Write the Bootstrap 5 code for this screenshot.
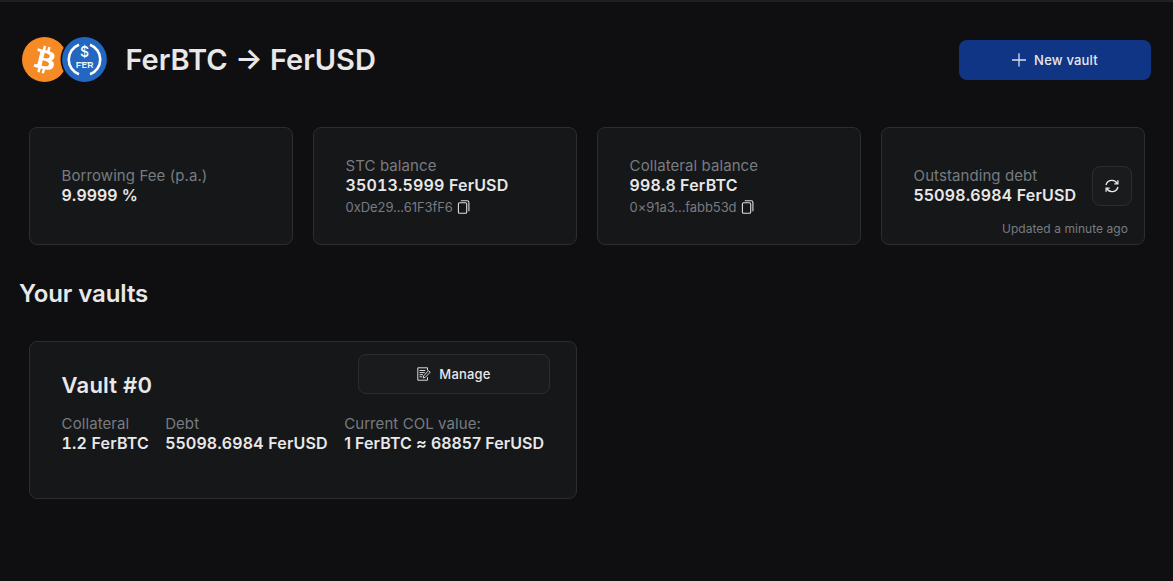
<!DOCTYPE html>
<html lang="en">
<head>
<meta charset="utf-8">
<meta name="viewport" content="width=device-width, initial-scale=1">
<title>FerBTC → FerUSD</title>
<link href="https://cdn.jsdelivr.net/npm/bootstrap@5.3.0/dist/css/bootstrap.min.css" rel="stylesheet">
<style>
body{background:#0f0f11;color:#e8e8e9;font-family:Inter,"Liberation Sans",sans-serif;border-top:2px solid #1f1f25;height:581px;overflow:hidden}
svg{display:block;flex:none}
.page-head{padding:35px 22px 0;height:78px}
.page-title{font-size:29px;font-weight:600;line-height:46px;margin:0 0 0 18.4px;letter-spacing:0}
.act{height:40px;width:192px;border-radius:8px;font-size:13px;font-weight:500;letter-spacing:.2px;color:#e8e8e9;padding:0}
.act span{padding-top:2px}
.act-new{background:#113585;border:0;margin-top:3px}
.act-plain{background:#1a1b1d;border:1px solid #2b2d30}
.stats{display:grid;grid-template-columns:repeat(4,264px);gap:20px;padding:47px 29px 0}
.panel{background:#161719;border:1px solid #2b2d2f;border-radius:8px;position:relative}
.stat{height:118px;padding:0 31.6px}
.stat-addr{padding-top:1px}
.lbl{font-size:15px;line-height:20px;color:#767c80;letter-spacing:.08px;white-space:nowrap}
.val{font-size:16px;line-height:20px;font-weight:600;letter-spacing:.2px;white-space:nowrap;margin-top:-1px;padding-bottom:1px}
.val-tab{font-variant-numeric:tabular-nums;letter-spacing:.15px}
.val-tight{letter-spacing:.06px}
.addr{font-size:13px;line-height:20px;color:#767c80;letter-spacing:-.08px;margin-top:1px;gap:4.6px}
.refresh{position:absolute;right:12px;top:38px;width:40px;height:40px;border-radius:8px;padding:0}
.updated{position:absolute;right:16px;bottom:6px;font-size:12px;line-height:18px;color:#767c80;letter-spacing:.05px;white-space:nowrap}
.sect{font-size:24px;line-height:30px;font-weight:600;margin:34px 0 0 19px;letter-spacing:-.08px}
.vault{width:548px;height:158px;margin:32px 0 0 29px;padding:12px 26px 0 31.6px}
.vault h3{font-size:22px;line-height:28px;font-weight:600;margin:17px 0 0;letter-spacing:.2px}
.figures{gap:16.3px;margin-top:15px}
</style>
</head>
<body>
<header class="page-head d-flex justify-content-between align-items-start">
  <div class="d-flex">
    <svg width="85" height="46" viewBox="0 0 85 46">
      <circle cx="22.5" cy="22.5" r="22.5" fill="#f68b26"/>
      <path transform="translate(0 .2) scale(1.4)" fill="#fff" d="M23.189 14.02c.314-2.096-1.283-3.223-3.465-3.975l.708-2.84-1.728-.43-.69 2.765c-.454-.114-.92-.22-1.385-.326l.695-2.783L15.596 6l-.708 2.839c-.376-.086-.746-.17-1.104-.26l.002-.009-2.384-.595-.46 1.846s1.283.294 1.256.312c.7.175.826.638.805 1.006l-.806 3.235c.048.012.11.03.18.057l-.183-.045-1.13 4.532c-.086.212-.303.531-.793.41.018.025-1.256-.313-1.256-.313l-.858 1.978 2.25.561c.418.105.828.215 1.231.318l-.715 2.872 1.727.43.708-2.84c.472.127.93.245 1.378.357l-.706 2.828 1.728.43.715-2.866c2.948.558 5.164.333 6.097-2.333.752-2.146-.037-3.385-1.588-4.192 1.13-.26 1.98-1.003 2.207-2.538zm-3.95 5.538c-.533 2.147-4.148.986-5.32.695l.95-3.805c1.172.293 4.929.872 4.37 3.11zm.535-5.569c-.487 1.953-3.495.96-4.47.717l.86-3.45c.975.243 4.118.696 3.61 2.733z"/>
      <circle cx="62.5" cy="22.5" r="24" fill="#0f0f11"/>
      <circle cx="62.5" cy="22.5" r="22.4" fill="#2367c1"/>
      <path d="M57 7.7A15.8 15.8 0 0 0 57 37.3M68 7.7A15.8 15.8 0 0 1 68 37.3" fill="none" stroke="#fff" stroke-width="2.6"/>
      <text x="62.5" y="20.3" text-anchor="middle" font-family="Inter" font-size="14" font-weight="500" fill="#fff">$</text>
      <text x="53.8" y="31.2" font-family="Inter" font-size="8" font-weight="500" fill="#fff" textLength="17.6" lengthAdjust="spacingAndGlyphs">FER</text>
      <path d="M54.5 25.9h15" stroke="#fff" stroke-width=".9"/>
    </svg>
    <h1 class="page-title">FerBTC → FerUSD</h1>
  </div>
  <button class="btn act act-new d-flex align-items-center justify-content-center">
    <svg width="14" height="14" viewBox="0 0 14 14" class="me-2"><path d="M7 .3v13.2M0 7h14" stroke="#d9deeb" stroke-width="1.3"/></svg><span>New vault</span>
  </button>
</header>

<section class="stats">
  <div class="panel stat d-flex flex-column justify-content-center">
    <div class="lbl">Borrowing Fee (p.a.)</div>
    <div class="val val-tight">9.9999 %</div>
  </div>
  <div class="panel stat stat-addr d-flex flex-column justify-content-center">
    <div class="lbl">STC balance</div>
    <div class="val val-tab">35013.5999 FerUSD</div>
    <div class="addr d-flex align-items-center"><span>0xDe29...61F3fF6</span>
      <svg width="14" height="14" viewBox="0 0 14 14" fill="none" stroke="#dedede" stroke-width="1.1"><rect x="1.4" y="2.7" width="8.3" height="10.6" rx="1.3"/><path d="M3.8.7h6.4c1 0 1.7.7 1.7 1.7v8.8"/></svg></div>
  </div>
  <div class="panel stat stat-addr d-flex flex-column justify-content-center">
    <div class="lbl">Collateral balance</div>
    <div class="val">998.8 FerBTC</div>
    <div class="addr d-flex align-items-center"><span>0×91a3...fabb53d</span>
      <svg width="14" height="14" viewBox="0 0 14 14" fill="none" stroke="#dedede" stroke-width="1.1"><rect x="1.4" y="2.7" width="8.3" height="10.6" rx="1.3"/><path d="M3.8.7h6.4c1 0 1.7.7 1.7 1.7v8.8"/></svg></div>
  </div>
  <div class="panel stat d-flex flex-column justify-content-center">
    <div class="lbl">Outstanding debt</div>
    <div class="val">55098.6984 FerUSD</div>
    <button class="btn act-plain refresh d-flex align-items-center justify-content-center" aria-label="Refresh">
      <svg width="14" height="14" viewBox="0 0 14 14" fill="none" stroke="#ececec" stroke-width="1.3"><path d="M1 6A6.1 6.1 0 0 1 12.3 4.6M13 8A6.1 6.1 0 0 1 1.7 9.4"/><path d="M12.9 1.3v3.6H9.3M1.1 12.7V9.1h3.6"/></svg>
    </button>
    <div class="updated">Updated a minute ago</div>
  </div>
</section>

<h2 class="sect">Your vaults</h2>
<section class="panel vault">
  <div class="d-flex justify-content-between align-items-start">
    <h3>Vault #0</h3>
    <button class="btn act act-plain d-flex align-items-center justify-content-center">
      <svg width="14" height="14" viewBox="0 0 14 14" class="me-2" fill="none" stroke="#dcdcdc" stroke-width="1"><path d="M10.5 3.4V.8H.8v12.4h9.7v-3"/><path d="M2.5 3.5h5.8M2.5 5.6h5.3M2.5 7.7h3.5M2.5 9.8h2.7"/><path d="M11.5 3.7l1.7 1.5-5 5.2-2 .6.4-2.1z"/></svg><span>Manage</span>
    </button>
  </div>
  <div class="figures d-flex">
    <div><div class="lbl">Collateral</div><div class="val val-tab">1.2 FerBTC</div></div>
    <div><div class="lbl">Debt</div><div class="val">55098.6984 FerUSD</div></div>
    <div><div class="lbl">Current COL value:</div><div class="val val-tight">1 FerBTC ≈ 68857 FerUSD</div></div>
  </div>
</section>
<script src="https://cdn.jsdelivr.net/npm/bootstrap@5.3.0/dist/js/bootstrap.bundle.min.js"></script>
</body>
</html>
